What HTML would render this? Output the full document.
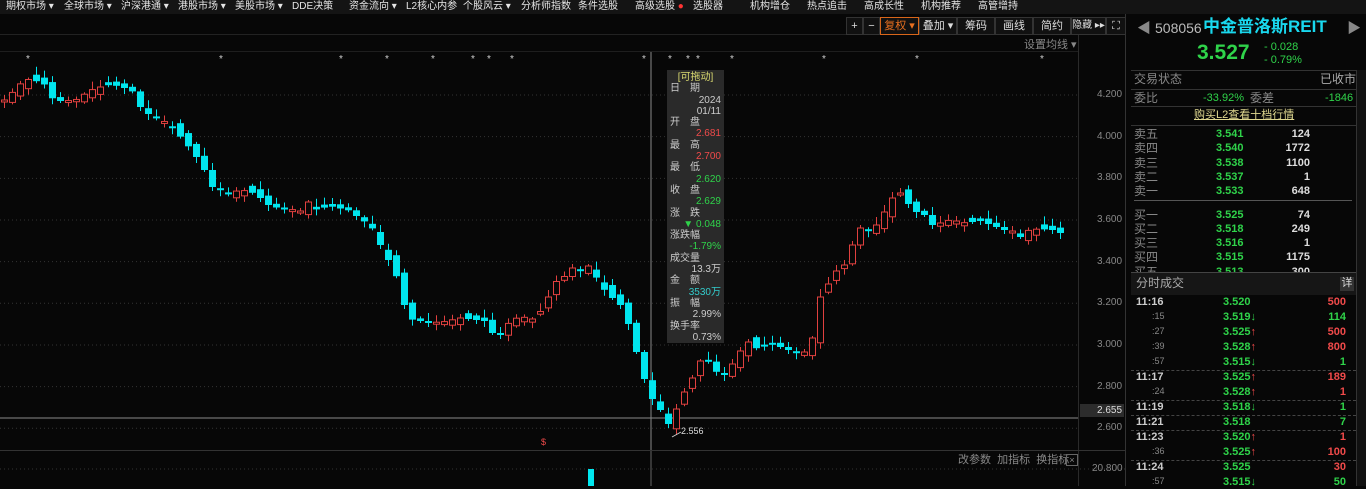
<!DOCTYPE html>
<html><head><meta charset="utf-8">
<style>
*{margin:0;padding:0;box-sizing:border-box}
body{width:1366px;height:486px;background:#070707;overflow:hidden;font-family:"Liberation Sans","Noto Sans CJK SC",sans-serif;color:#ccc;position:relative;font-size:11px}
.abs{position:absolute;white-space:nowrap;line-height:1.15}
#nav{position:absolute;left:0;top:0;width:1366px;height:14px;background:#141414;font-size:10px;color:#e6e6e6}
#nav span{position:absolute;top:1px;line-height:12px}
.tb{position:absolute;top:17px;height:18px;border:1px solid #333;background:#111;color:#ddd;font-size:11px;text-align:center;line-height:16px;white-space:nowrap;overflow:hidden}
.g{color:#2fd34a}.r{color:#f04a4a}.w{color:#ddd}.gr{color:#888}
</style></head><body>
<div id="nav">
<span style="left:6px">期权市场 ▾</span><span style="left:64px">全球市场 ▾</span><span style="left:121px">沪深港通 ▾</span><span style="left:178px">港股市场 ▾</span><span style="left:235px">美股市场 ▾</span><span style="left:292px">DDE决策</span>
<span style="left:349px">资金流向 ▾</span><span style="left:406px">L2核心内参</span><span style="left:463px">个股风云 ▾</span><span style="left:521px">分析师指数</span><span style="left:578px">条件选股</span><span style="left:635px">高级选股 <b style="color:#f33">●</b></span><span style="left:693px">选股器</span><span style="left:750px">机构增仓</span><span style="left:807px">热点追击</span><span style="left:864px">高成长性</span><span style="left:921px">机构推荐</span><span style="left:978px">高管增持</span>
</div>
<div style="position:absolute;left:0;top:14px;width:1126px;height:21px;border-bottom:1px solid #222"></div>
<div class="tb" style="left:846px;width:17px">+</div><div class="tb" style="left:863px;width:17px">−</div>
<div class="tb" style="left:880px;width:39px;border-color:#d8661a;color:#e87020">复权 ▾</div>
<div class="tb" style="left:919px;width:38px">叠加 ▾</div><div class="tb" style="left:957px;width:38px">筹码</div><div class="tb" style="left:995px;width:38px">画线</div><div class="tb" style="left:1033px;width:38px">简约</div><div class="tb" style="left:1071px;width:35px;font-size:10px">隐藏 ▸▸</div><div class="tb" style="left:1106px;width:20px">⛶</div>
<div class="abs gr" style="left:1024px;top:39px;font-size:11px">设置均线 ▾</div>
<div style="position:absolute;left:0;top:51px;width:1078px;height:1px;background:#1e1e1e"></div>
<div style="position:absolute;left:1078px;top:35px;width:1px;height:451px;background:#2a2a2a"></div>
<div style="position:absolute;left:1125px;top:14px;width:1px;height:472px;background:#333"></div>
<div style="position:absolute;left:0;top:450px;width:1126px;height:1px;background:#333"></div>
<svg id="ch" class="abs" style="left:0;top:0" width="1126" height="486"></svg>
<div class="abs" style="left:1080px;top:404px;width:44px;height:13px;background:#2c2c2c"></div>
<div id="ax"></div>
<div class="abs gr" style="left:958px;top:454px;font-size:11px">改参数 &nbsp;加指标 &nbsp;换指标</div>
<div class="abs gr" style="left:1066px;top:454px;width:12px;height:12px;border:1px solid #666;font-size:9px;line-height:10px;text-align:center">×</div>
<div class="abs gr" style="left:1092px;top:463px;font-size:10px">20.800</div>
<div class="abs" style="left:667px;top:70px;width:57px;height:273px;background:#2a2a2a;font-size:10px;line-height:11.3px;padding:2px 3px;color:#ccc">
<div style="color:#d8d870;text-align:center">[可拖动]</div>
<div>日　期</div><div style="text-align:right">2024</div><div style="text-align:right">01/11</div>
<div>开　盘</div><div class="r" style="text-align:right">2.681</div>
<div>最　高</div><div class="r" style="text-align:right">2.700</div>
<div>最　低</div><div class="g" style="text-align:right">2.620</div>
<div>收　盘</div><div class="g" style="text-align:right">2.629</div>
<div>涨　跌</div><div class="g" style="text-align:right">▼ 0.048</div>
<div>涨跌幅</div><div class="g" style="text-align:right">-1.79%</div>
<div>成交量</div><div style="text-align:right">13.3万</div>
<div>金　额</div><div style="text-align:right;color:#3cc">3530万</div>
<div>振　幅</div><div style="text-align:right">2.99%</div>
<div>换手率</div><div style="text-align:right">0.73%</div>
</div>
<div class="abs w" style="left:681px;top:426px;font-size:9px">2.556</div>
<div class="abs r" style="left:541px;top:437px;font-size:9px">$</div>
<div class="abs" style="left:1126px;top:14px;width:240px;height:472px;background:#070707"></div>
<div class="abs gr" style="left:1137px;top:20px;font-size:14px">◀</div>
<div class="abs" style="left:1155px;top:20px;font-size:14px;color:#bbb">508056</div>
<div class="abs" style="left:1203px;top:17px;font-size:17px;font-weight:bold;color:#19d8ee">中金普洛斯REIT</div>
<div class="abs gr" style="left:1347px;top:20px;font-size:14px">▶</div>
<div class="abs g" style="left:1197px;top:41px;font-size:21px;font-weight:bold">3.527</div>
<div class="abs g" style="left:1264px;top:41px;font-size:11px">- 0.028</div>
<div class="abs g" style="left:1264px;top:54px;font-size:11px">- 0.79%</div>
<div class="abs" style="left:1131px;top:70px;width:225px;height:1px;background:#333"></div>
<div class="abs" style="left:1356px;top:70px;width:10px;height:416px;background:#111;border-left:1px solid #333"></div>
<div class="abs gr" style="left:1134px;top:73px;font-size:12px">交易状态</div><div class="abs" style="left:1320px;top:73px;font-size:12px;color:#aaa">已收市</div>
<div class="abs" style="left:1131px;top:89px;width:225px;height:1px;background:#333"></div>
<div class="abs gr" style="left:1134px;top:92px;font-size:12px">委比</div><div class="abs g" style="left:1203px;top:92px;font-size:11px">-33.92%</div><div class="abs gr" style="left:1250px;top:92px;font-size:12px">委差</div><div class="abs g" style="left:1325px;top:92px;font-size:11px">-1846</div>
<div class="abs" style="left:1131px;top:106px;width:225px;height:1px;background:#333"></div>
<div class="abs" style="left:1194px;top:109px;font-size:11px;color:#e0d890;text-decoration:underline">购买L2查看十档行情</div>
<div class="abs" style="left:1131px;top:125px;width:225px;height:1px;background:#333"></div>
<div class="abs" style="left:1134px;top:200px;width:218px;height:1px;background:#555"></div>
<div id="ob"></div>
<div class="abs" style="left:1131px;top:272px;width:225px;height:1px;background:#444"></div>
<div class="abs" style="left:1131px;top:273px;width:225px;height:22px;background:#161616"></div>
<div class="abs" style="left:1136px;top:277px;font-size:12px;color:#aaa">分时成交</div>
<div class="abs" style="left:1340px;top:277px;width:14px;height:14px;background:#333;font-size:11px;color:#ddd;text-align:center">详</div>
<div id="tk"></div>
<script>
var s=document.getElementById('ch'),h='';
function Y(p){return 95+(4.2-p)*208.3}
var lv=[[4.2,'4.200'],[4.0,'4.000'],[3.8,'3.800'],[3.6,'3.600'],[3.4,'3.400'],[3.2,'3.200'],[3.0,'3.000'],[2.8,'2.800'],[2.6,'2.600']],ax='';
lv.forEach(function(l){var y=Y(l[0]);h+='<line x1="0" x2="1078" y1="'+y+'" y2="'+y+'" stroke="#333" stroke-dasharray="1,3"/>';ax+='<div class="abs gr" style="left:1097px;top:'+(y-6)+'px;font-size:10px">'+l[1]+'</div>'});
ax+='<div class="abs" style="left:1097px;top:405px;font-size:10px;color:#ddd">2.655</div>';
document.getElementById('ax').innerHTML=ax;
h+='<line x1="0" x2="1126" y1="469" y2="469" stroke="#333" stroke-dasharray="1,3"/>';
h+='<line x1="651" x2="651" y1="52" y2="450" stroke="#888"/>';
h+='<line x1="651" x2="651" y1="451" y2="486" stroke="#666"/>';
h+='<line x1="0" x2="1078" y1="418" y2="418" stroke="#888"/>';
h+='<rect x="588" y="469" width="6" height="20" fill="#00e8f0"/>';
[29,222,342,388,434,474,490,513,645,671,689,699,733,825,918,1043].forEach(function(x){h+='<text x="'+(x-3)+'" y="62" fill="#ccc" font-size="10">*</text>'});
var k=[[0,100],[5,100],[22,84],[30,82],[45,90],[60,97],[75,98],[90,90],[100,88],[110,87],[120,90],[130,95],[140,102],[150,112],[165,120],[175,130],[190,150],[200,165],[210,185],[215,200],[225,190],[240,186],[255,192],[270,207],[290,212],[300,215],[310,205],[330,203],[350,210],[360,220],[370,226],[380,248],[390,268],[400,290],[410,315],[420,318],[440,322],[460,320],[480,325],[500,330],[510,318],[520,315],[535,320],[545,305],[555,285],[565,280],[575,270],[585,262],[590,262],[600,283],[610,295],[620,305],[630,330],[640,370],[650,400],[660,415],[670,420],[680,395],[690,380],[700,360],[710,362],[720,380],[730,370],[740,355],[750,345],[760,342],[770,340],[780,345],[790,350],[800,355],[810,350],[820,300],[830,285],[840,270],[850,245],[860,225],[870,230],[880,220],[890,200],[900,195],[910,210],[920,220],[935,220],[950,217],[965,222],[980,222],[990,227],[1000,232],[1010,237],[1020,232],[1030,225],[1040,227],[1050,228],[1060,233]];
function iy(x){for(var i=1;i<k.length;i++){if(x<=k[i][0]){var a=k[i-1],b=k[i];return a[1]+(b[1]-a[1])*(x-a[0])/(b[0]-a[0])}}return 233}
var prev=iy(0);
for(var x=4;x<=1060;x+=8){var c=iy(x)+((x*37)%11-5)*1.0,o=prev+((x*17)%9-4)*1.2;var t=Math.min(o,c),b=Math.max(o,c);if(b-t<2){b=t+2}
var up=c<o;var col=up?'#e0403f':'#00e5ee';var hi=t-2-((x*13)%7),lo=b+2+((x*7)%6);
h+='<line x1="'+(x+.5)+'" x2="'+(x+.5)+'" y1="'+hi+'" y2="'+lo+'" stroke="'+col+'"/>';
if(up)h+='<rect x="'+(x-2.5)+'" y="'+t+'" width="6" height="'+(b-t)+'" fill="#070707" stroke="'+col+'"/>';
else h+='<rect x="'+(x-3)+'" y="'+t+'" width="7" height="'+(b-t)+'" fill="'+col+'"/>';
prev=c}
h+='<line x1="672" y1="437" x2="681" y2="432" stroke="#ccc"/>';
s.innerHTML=h;
var ob=[['卖五','3.541','124'],['卖四','3.540','1772'],['卖三','3.538','1100'],['卖二','3.537','1'],['卖一','3.533','648'],['买一','3.525','74'],['买二','3.518','249'],['买三','3.516','1'],['买四','3.515','1175'],['买五','3.513','300']],o='';
ob.forEach(function(r,i){var y=127+i*14.3+(i>4?9:0);o+='<div class="abs gr" style="left:1134px;top:'+y+'px;font-size:12px;line-height:14px">'+r[0]+'</div><div class="abs g" style="left:1216px;top:'+y+'px;font-size:11px;font-weight:bold;line-height:14px">'+r[1]+'</div><div class="abs w" style="left:1270px;top:'+y+'px;width:40px;text-align:right;font-size:11px;font-weight:bold;line-height:14px">'+r[2]+'</div>'});
document.getElementById('ob').innerHTML=o;
var tk=[['11:16','3.520','','500','r',0],[':15','3.519','d','114','g',0],[':27','3.525','u','500','r',0],[':39','3.528','u','800','r',0],[':57','3.515','d','1','g',1],['11:17','3.525','u','189','r',0],[':24','3.528','u','1','r',1],['11:19','3.518','d','1','g',1],['11:21','3.518','','7','g',1],['11:23','3.520','u','1','r',0],[':36','3.525','u','100','r',1],['11:24','3.525','','30','r',0],[':57','3.515','d','50','g',0]],t='';
tk.forEach(function(r,i){var y=296+i*15;var big=r[0].length>3;t+='<div class="abs" style="left:'+(big?1136:1152)+'px;top:'+y+'px;font-size:'+(big?11:9)+'px;font-weight:'+(big?'bold':'normal')+';color:'+(big?'#ccc':'#888')+'">'+r[0]+'</div><div class="abs g" style="left:1223px;top:'+y+'px;font-size:11px;font-weight:bold">'+r[1]+(r[2]=='u'?'<span class="r">↑</span>':r[2]=='d'?'<span class="g">↓</span>':'')+'</div><div class="abs '+r[4]+'" style="left:1306px;top:'+y+'px;width:40px;text-align:right;font-size:11px;font-weight:bold">'+r[3]+'</div>';if(r[5])t+='<div class="abs" style="left:1131px;top:'+(y+14)+'px;width:225px;border-top:1px dashed #444"></div>'});
document.getElementById('tk').innerHTML=t;
</script>
</body></html>
